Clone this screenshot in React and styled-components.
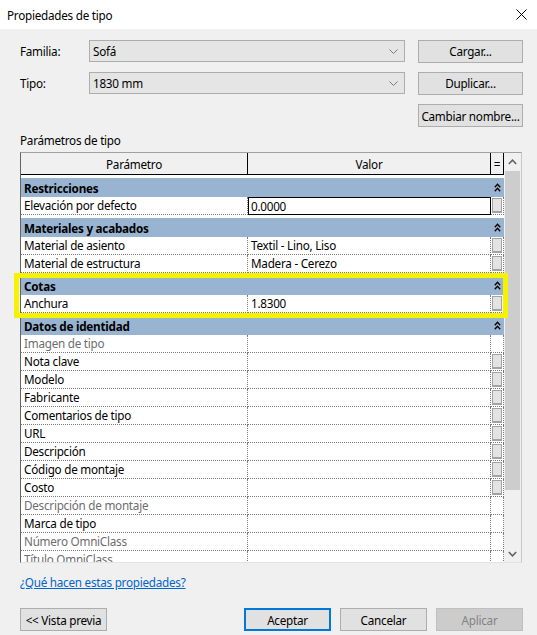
import React from "react";
import styled, { createGlobalStyle, css } from "styled-components";

const GlobalStyle = createGlobalStyle`
  body {
    margin: 0;
    background: #f0f0f0;
    font-family: "Noto Sans", "Liberation Sans", sans-serif;
    font-size: 11.7px;
    letter-spacing: -0.25px;
    color: #000;
  }
  * { box-sizing: border-box; }
`;

const Window = styled.div`
  position: relative;
  width: 537px;
  height: 635px;
  background: #f0f0f0;
  display: flex;
  flex-direction: column;
  overflow: hidden;
`;

const TitleBar = styled.div`
  height: 29px;
  background: #fff;
  display: flex;
  align-items: center;
  justify-content: space-between;
  padding: 0 10px 0 7px;
`;

const Content = styled.div`
  padding: 11px 14px 0 20px;
  display: flex;
  flex-direction: column;
`;

const FormGrid = styled.div`
  display: grid;
  grid-template-columns: 69px 316px 118px;
  grid-template-rows: 22px 22px 23px;
  row-gap: 10px;
  align-items: center;
`;

const Label = styled.span`
  line-height: 16px;
`;

const Combo = styled.div`
  height: 22px;
  border: 1px solid #adadad;
  background: #e5e5e5;
  display: flex;
  align-items: center;
  justify-content: space-between;
  padding: 0 6px 0 3px;
`;

const Button = styled.button`
  height: 23px;
  width: 105px;
  justify-self: end;
  border: 1px solid #adadad;
  background: #e1e1e1;
  font-family: inherit;
  font-size: inherit;
  letter-spacing: inherit;
  white-space: nowrap;
  color: #000;
  padding: 0;
  ${(p) =>
    p.$w &&
    css`
      width: ${p.$w}px;
    `}
  ${(p) =>
    p.$default &&
    css`
      border-color: #0078d7;
      box-shadow: inset 0 0 0 1px #0078d7;
    `}
  ${(p) =>
    p.$disabled &&
    css`
      background: #cccccc;
      border-color: #bfbfbf;
      color: #838383;
    `}
`;

const SectionLabel = styled.div`
  margin-top: 5px;
  line-height: 16px;
  margin-bottom: 4px;
`;

const TableFrame = styled.div`
  width: 502px;
  height: 411px;
  background: #fff;
  border-top: 1px solid #a0a0a0;
  border-left: 1px solid #646464;
  border-right: 1px solid #c8c8c8;
  border-bottom: 1px solid #e3e3e3;
  display: flex;
`;

const GridArea = styled.div`
  width: 483px;
  overflow: hidden;
  display: flex;
  flex-direction: column;
`;

const cols = "227px 243px 13px";

const HeaderRow = styled.div`
  display: grid;
  grid-template-columns: ${cols};
  height: 22px;
  flex-shrink: 0;
  background: #f0f0f0;
  border-bottom: 1px solid #000;
`;

const HeaderCell = styled.div`
  border-right: 1px solid #000;
  display: flex;
  align-items: center;
  justify-content: center;
`;

const GroupRow = styled.div`
  flex-shrink: 0;
  margin-top: 3px;
  height: 19px;
  background: #99b4d1;
  display: flex;
  align-items: center;
  justify-content: space-between;
  padding: 0 3px 0 3px;
  font-weight: 700;
`;

const DataRow = styled.div`
  flex-shrink: 0;
  display: grid;
  grid-template-columns: ${cols};
  height: 18px;
`;

const Cell = styled.div`
  border-right: 1px dotted #7a7a7a;
  border-bottom: 1px dotted #7a7a7a;
  padding-left: 3px;
  line-height: 17px;
  white-space: nowrap;
  overflow: hidden;
  color: ${(p) => (p.$muted ? "#6d6d6d" : "#000")};
  ${(p) =>
    p.$selected &&
    css`
      border: 1px solid #000;
      padding-left: 2px;
      line-height: 16px;
    `}
`;

const EqCell = styled.div`
  border-right: 1px dotted #7a7a7a;
  border-bottom: 1px dotted #7a7a7a;
  display: flex;
  align-items: center;
  justify-content: center;
`;

const MiniButton = styled.div`
  width: 10px;
  height: 15px;
  background: #e3e3e3;
  border: 1px solid #a3a3a3;
  border-bottom-width: 2px;
`;

const ScrollBar = styled.div`
  width: 17px;
  background: #f0f0f0;
  display: flex;
  flex-direction: column;
`;

const ScrollArrow = styled.div`
  height: 17px;
  flex-shrink: 0;
  display: flex;
  align-items: center;
  justify-content: center;
`;

const ScrollTrack = styled.div`
  flex: 1;
  padding: 1px 1px 0 1px;
`;

const Thumb = styled.div`
  height: 319px;
  background: #cdcdcd;
`;

const HelpLink = styled.a`
  margin-top: 11px;
  line-height: 16px;
  color: #0066cc;
  text-decoration: underline;
  align-self: flex-start;
`;

const Footer = styled.div`
  margin-top: 18px;
  display: flex;
  justify-content: space-between;
`;

const ButtonGroup = styled.div`
  display: flex;
  gap: 9px;
`;

const Highlight = styled.div`
  position: absolute;
  left: 14px;
  top: 273px;
  width: 494px;
  height: 45px;
  border: 5px solid #f7f200;
  pointer-events: none;
`;

const CloseIcon = () => (
  <svg width="11" height="11" viewBox="0 0 11 11">
    <path d="M0.5 0.5 L10.5 10.5 M10.5 0.5 L0.5 10.5" stroke="#000" strokeWidth="1" />
  </svg>
);

const ComboArrow = () => (
  <svg width="9" height="5" viewBox="0 0 9 5">
    <path d="M0.5 0.5 L4.5 4.5 L8.5 0.5" stroke="#7a7a7a" strokeWidth="1" fill="none" />
  </svg>
);

const Collapse = () => (
  <svg width="7" height="9" viewBox="0 0 7 9">
    <path
      d="M0.8 4.2 L3.5 1.3 L6.2 4.2 M0.8 8.2 L3.5 5.3 L6.2 8.2"
      stroke="#000"
      strokeWidth="1.4"
      fill="none"
    />
  </svg>
);

const Chevron = ({ down }) => (
  <svg width="9" height="6" viewBox="0 0 9 6">
    <path
      d={down ? "M0.8 1 L4.5 4.8 L8.2 1" : "M0.8 5 L4.5 1.2 L8.2 5"}
      stroke="#606060"
      strokeWidth="1.5"
      fill="none"
    />
  </svg>
);

const rows = [
  { group: "Restricciones" },
  { name: "Elevación por defecto", value: "0.0000", btn: true, selected: true },
  { group: "Materiales y acabados" },
  { name: "Material de asiento", value: "Textil - Lino, Liso", btn: true },
  { name: "Material de estructura", value: "Madera - Cerezo", btn: true },
  { group: "Cotas" },
  { name: "Anchura", value: "1.8300", btn: true },
  { group: "Datos de identidad" },
  { name: "Imagen de tipo", muted: true },
  { name: "Nota clave", btn: true },
  { name: "Modelo", btn: true },
  { name: "Fabricante", btn: true },
  { name: "Comentarios de tipo", btn: true },
  { name: "URL", btn: true },
  { name: "Descripción", btn: true },
  { name: "Código de montaje", btn: true },
  { name: "Costo", btn: true },
  { name: "Descripción de montaje", muted: true },
  { name: "Marca de tipo" },
  { name: "Número OmniClass", muted: true },
  { name: "Título OmniClass", muted: true },
];

export default function App() {
  return (
    <>
      <GlobalStyle />
      <Window>
        <TitleBar>
          <span>Propiedades de tipo</span>
          <CloseIcon />
        </TitleBar>
        <Content>
          <FormGrid>
            <Label>Familia:</Label>
            <Combo>
              <span>Sofá</span>
              <ComboArrow />
            </Combo>
            <Button>Cargar...</Button>
            <Label>Tipo:</Label>
            <Combo>
              <span>1830 mm</span>
              <ComboArrow />
            </Combo>
            <Button>Duplicar...</Button>
            <span />
            <span />
            <Button>Cambiar nombre...</Button>
          </FormGrid>

          <SectionLabel>Parámetros de tipo</SectionLabel>
          <TableFrame>
            <GridArea>
              <HeaderRow>
                <HeaderCell>Parámetro</HeaderCell>
                <HeaderCell>Valor</HeaderCell>
                <HeaderCell>=</HeaderCell>
              </HeaderRow>
              {rows.map((r, i) =>
                r.group ? (
                  <GroupRow key={i}>
                    <span>{r.group}</span>
                    <Collapse />
                  </GroupRow>
                ) : (
                  <DataRow key={i}>
                    <Cell $muted={r.muted}>{r.name}</Cell>
                    <Cell $selected={r.selected}>{r.value || ""}</Cell>
                    <EqCell>{r.btn && <MiniButton />}</EqCell>
                  </DataRow>
                )
              )}
            </GridArea>
            <ScrollBar>
              <ScrollArrow>
                <Chevron />
              </ScrollArrow>
              <ScrollTrack>
                <Thumb />
              </ScrollTrack>
              <ScrollArrow>
                <Chevron down />
              </ScrollArrow>
            </ScrollBar>
          </TableFrame>

          <HelpLink href="#">¿Qué hacen estas propiedades?</HelpLink>

          <Footer>
            <Button $w={87}>&lt;&lt; Vista previa</Button>
            <ButtonGroup>
              <Button $w={87} $default>
                Aceptar
              </Button>
              <Button $w={87}>Cancelar</Button>
              <Button $w={87} $disabled>
                Aplicar
              </Button>
            </ButtonGroup>
          </Footer>
        </Content>
        <Highlight />
      </Window>
    </>
  );
}
